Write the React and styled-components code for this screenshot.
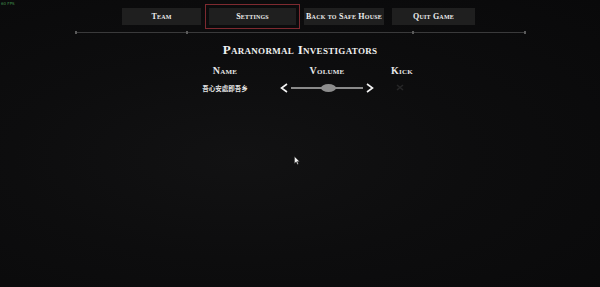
import React from "react";
import styled, { createGlobalStyle } from "styled-components";

const GlobalStyle = createGlobalStyle`
  html, body {
    margin: 0;
    padding: 0;
    background: #0b0b0c;
  }
  body {
    font-family: "Liberation Serif", "Noto Sans CJK SC", serif;
  }
`;

const navItems = [
  { label: "Team", width: 79 },
  { label: "Settings", width: 87, active: true },
  { label: "Back to Safe House", width: 80 },
  { label: "Quit Game", width: 83 },
];

function App() {
  return (
    <>
      <GlobalStyle />
      <Screen>
        <Fps>60 FPS</Fps>
        <Nav>
          {navItems.map((item) => (
            <NavButton key={item.label} $width={item.width} $active={item.active}>
              {item.label}
            </NavButton>
          ))}
        </Nav>
        <Divider>
          <Tick />
          <Segment $width={109} />
          <Tick />
          <Segment $width={224} />
          <Tick />
          <Segment $width={110} />
          <Tick />
        </Divider>
        <Title>Paranormal Investigators</Title>
        <Table>
          <HeadCell>Name</HeadCell>
          <HeadCell>Volume</HeadCell>
          <HeadCell>Kick</HeadCell>
          <PlayerName>吾心安處即吾乡</PlayerName>
          <Slider>
            <Chevron viewBox="0 0 8 10">
              <path d="M7 1 L1.5 5 L7 9" />
            </Chevron>
            <Track>
              <Thumb />
            </Track>
            <Chevron viewBox="0 0 8 10">
              <path d="M1 1 L6.5 5 L1 9" />
            </Chevron>
          </Slider>
          <KickCell>
            <svg width="8" height="7" viewBox="0 0 8 7">
              <path d="M1 1 L7 6 M7 1 L1 6" stroke="#262627" strokeWidth="1.6" />
            </svg>
          </KickCell>
        </Table>
        <Cursor viewBox="0 0 6 9" width="6" height="9">
          <path d="M0.5 0.5 L0.5 7.5 L2.2 5.8 L3.4 8.5 L4.4 8 L3.3 5.4 L5.5 5.4 Z" fill="#f2f2f2" stroke="#222" strokeWidth="0.4" />
        </Cursor>
      </Screen>
    </>
  );
}

const Screen = styled.div`
  position: relative;
  width: 600px;
  height: 287px;
  overflow: hidden;
  background: radial-gradient(ellipse at 40% 55%, #121213 0%, #0d0d0e 45%, #09090a 100%);
  display: flex;
  flex-direction: column;
  align-items: center;
`;

const Fps = styled.div`
  position: absolute;
  left: 1px;
  top: 1px;
  font-family: "DejaVu Sans", sans-serif;
  font-size: 4px;
  line-height: 5px;
  color: #3f8a4a;
`;

const Nav = styled.div`
  display: flex;
  gap: 8px;
  margin-top: 8px;
  margin-left: -3px;
`;

const NavButton = styled.div`
  width: ${(p) => p.$width}px;
  height: 17px;
  background: #1f1f1f;
  color: #ececec;
  font-size: 8px;
  font-weight: bold;
  font-variant: small-caps;
  letter-spacing: 0.2px;
  display: flex;
  align-items: center;
  justify-content: center;
  white-space: nowrap;
  outline: ${(p) => (p.$active ? "1px solid #7e2a30" : "none")};
  outline-offset: 3px;
`;

const Divider = styled.div`
  display: flex;
  align-items: center;
  margin-top: 6px;
  height: 3px;
`;

const Segment = styled.div`
  width: ${(p) => p.$width}px;
  height: 1px;
  background: #3a3a3b;
`;

const Tick = styled.div`
  width: 2px;
  height: 3px;
  background: #5a5a5a;
`;

const Title = styled.div`
  margin-top: 8px;
  font-size: 13px;
  font-weight: bold;
  font-variant: small-caps;
  letter-spacing: 0.3px;
  color: #f0f0f0;
  line-height: 16px;
`;

const Table = styled.div`
  display: grid;
  grid-template-columns: 90px 114px 36px;
  grid-auto-rows: 17px;
  margin-top: 4px;
  align-items: center;
  justify-items: center;
`;

const HeadCell = styled.div`
  font-size: 10px;
  font-weight: bold;
  font-variant: small-caps;
  letter-spacing: 0.2px;
  color: #e6e6e6;
`;

const PlayerName = styled.div`
  font-family: "Noto Sans CJK SC", sans-serif;
  font-size: 6.5px;
  font-weight: bold;
  color: #e4e4e4;
  white-space: nowrap;
`;

const Slider = styled.div`
  display: flex;
  align-items: center;
  gap: 3px;
`;

const Chevron = styled.svg`
  width: 8px;
  height: 10px;
  fill: none;
  stroke: #f4f4f4;
  stroke-width: 1.6;
`;

const Track = styled.div`
  width: 72px;
  height: 2px;
  background: #8a8a8a;
  display: flex;
  align-items: center;
  justify-content: center;
`;

const Thumb = styled.div`
  width: 15px;
  height: 8px;
  border-radius: 50%;
  background: #8d8d8d;
  margin-left: 2px;
`;

const KickCell = styled.div`
  display: flex;
  align-items: center;
  margin-left: -4px;
`;

const Cursor = styled.svg`
  position: absolute;
  left: 294px;
  top: 156px;
`;

export default App;
